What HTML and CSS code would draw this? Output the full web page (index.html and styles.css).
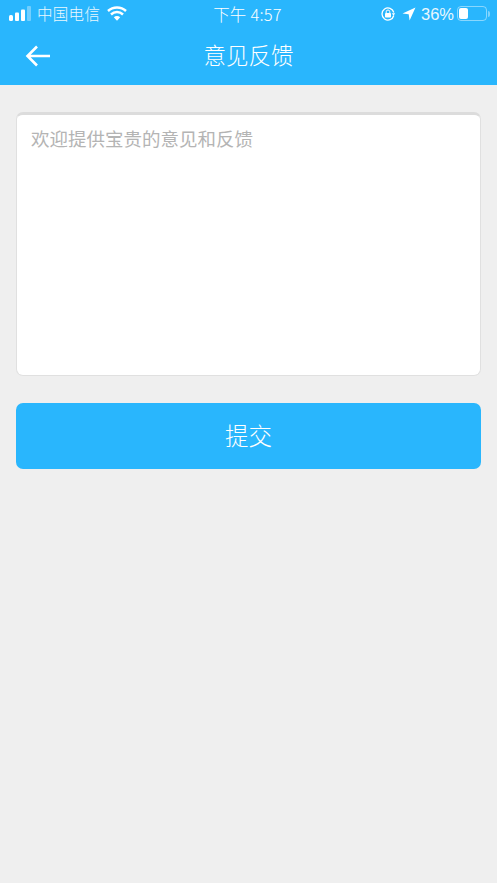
FILE: index.html
```html
<!DOCTYPE html>
<html lang="zh-CN">
<head>
<meta charset="utf-8">
<title>意见反馈</title>
<link rel="stylesheet" href="styles.css">
</head>
<body>
<header class="top">
  <div class="status">
    <div class="status-left">
      <svg class="signal" width="22" height="15" viewBox="0 0 22 15"><rect x="0" y="9" width="4" height="6" rx="1.500" fill="#fff"/><rect x="6" y="6.500" width="4" height="8.500" rx="1" fill="#fff"/><rect x="12" y="3.500" width="4" height="11.500" rx="1" fill="#fff"/><rect x="18" y="0" width="4" height="15" rx="1" fill="#fff" fill-opacity=".35"/></svg>
      <span class="carrier">中国电信</span>
      <svg class="wifi" width="20" height="15" viewBox="0 0 20 15"><path d="M1 5C6 .4 14 .4 19 5" fill="none" stroke="#fff" stroke-width="2.500"/><path d="M4 8.500C7.500 5.300 12.500 5.300 16 8.500" fill="none" stroke="#fff" stroke-width="2.500"/><path d="M6.800 11.200C8.700 9.500 11.300 9.500 13.200 11.200L10 14.800Z" fill="#fff"/></svg>
    </div>
    <div class="clock">下午 4:57</div>
    <div class="status-right">
      <svg class="lock" width="16" height="16" viewBox="0 0 16 16"><path d="M13.800 9.500A6 6 0 1 1 13.800 6.500" fill="none" stroke="#fff" stroke-width="1.300"/><path d="M11.800 7.300H15.200L13.500 9.800Z" fill="#fff"/><rect x="5" y="7" width="6" height="4.500" rx=".8" fill="#fff"/><path d="M6.200 7V5.800a1.800 1.800 0 0 1 3.600 0V7" fill="none" stroke="#fff" stroke-width="1"/></svg>
      <svg class="loc" width="14" height="14" viewBox="0 0 14 14"><path d="M13.500 .5 .5 6.600 6.700 7.300 7.600 13.500Z" fill="#fff"/></svg>
      <span class="pct">36%</span>
      <div class="battery"><div class="battery-fill"></div></div>
      <div class="battery-cap"></div>
    </div>
  </div>
  <div class="nav">
    <svg class="back" width="26" height="22" viewBox="0 0 26 22"><path d="M12 1.500 2.500 11 12 20.500M2.500 11H25" fill="none" stroke="#fff" stroke-width="2.600"/></svg>
    <h1 class="title">意见反馈</h1>
  </div>
</header>
<main class="content">
  <div class="box">
    <p class="placeholder">欢迎提供宝贵的意见和反馈</p>
  </div>
  <button class="submit" type="button">提交</button>
</main>
</body>
</html>
```
FILE: styles.css
```css
* { box-sizing: border-box; }
html, body { margin: 0; padding: 0; }
body {
  width: 497px;
  height: 883px;
  overflow: hidden;
  background: #efefef;
  font-family: "Noto Sans CJK SC", "Liberation Sans", sans-serif;
  color: #fff;
}
.top { background: #29b6fd; height: 85px; }
.status {
  height: 29px;
  display: grid;
  grid-template-columns: 1fr auto 1fr;
  align-items: center;
  padding: 0 7px 2px 9px;
}
.status-left, .status-right { display: flex; align-items: center; }
.status-right { justify-content: flex-end; }
.carrier { font-size: 15.500px; line-height: 20px; margin: 0 0 2px 6px; letter-spacing: .3px; opacity: .9; font-weight: 300; }
.wifi { margin-left: 7px; }
.clock { font-size: 16.500px; font-weight: 300; letter-spacing: .2px; transform: translateX(-2px); }
.lock { margin-right: 6px; }
.loc { margin-right: 5px; }
.pct { font-family: "Liberation Sans", sans-serif; font-size: 16.500px; line-height: 20px; margin-top: 1px; opacity: .9; }
.battery {
  width: 30px;
  height: 15px;
  margin-left: 3px;
  border: 1px solid rgba(255,255,255,.45);
  border-radius: 4px;
  padding: 1px;
}
.battery-fill { width: 9px; height: 100%; background: #fff; border-radius: 2px; }
.battery-cap { width: 2px; height: 6px; margin-left: 1px; background: rgba(255,255,255,.4); border-radius: 0 2px 2px 0; }
.nav {
  height: 56px;
  position: relative;
  display: flex;
  align-items: center;
  justify-content: center;
  padding-bottom: 7px;
}
.back { position: absolute; left: 25px; top: 16px; }
.title { margin: 0; font-size: 22.500px; font-weight: 300; line-height: 30px; }
.content { padding: 27px 16px 0; }
.box {
  height: 264px;
  background: #fff;
  border: 1px solid #e0e0e0;
  border-top: 3px solid #dcdcdc;
  border-radius: 7px;
  padding: 9px 14px;
}
.placeholder { margin: 0; font-size: 18.500px; line-height: 29px; color: #b4b4b4; }
.submit {
  display: block;
  width: 100%;
  height: 66px;
  margin-top: 27px;
  padding-bottom: 3px;
  border: 0;
  border-radius: 7px;
  background: #29b6fd;
  color: #fff;
  font: 300 23.500px "Noto Sans CJK SC", sans-serif;
}
```
